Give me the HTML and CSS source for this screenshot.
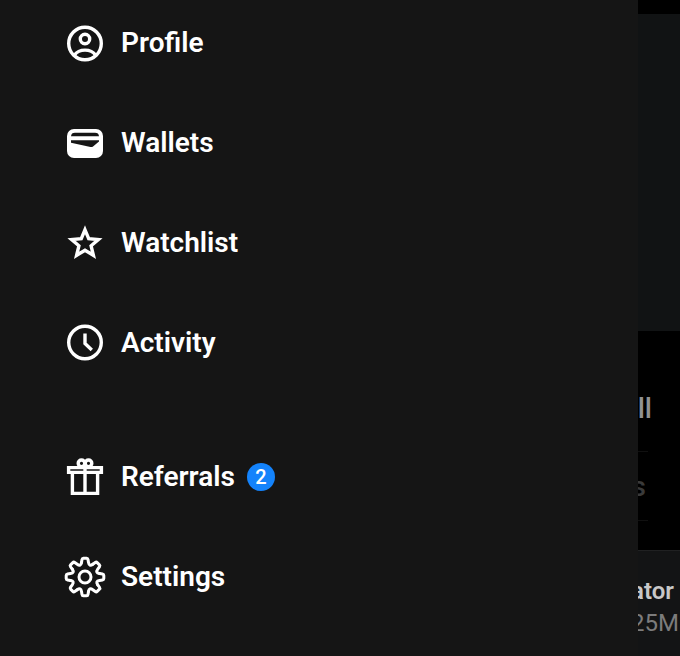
FILE: index.html
```html
<!DOCTYPE html>
<html lang="en">

<head>
  <meta charset="UTF-8" />
  <meta name="viewport" content="width=device-width, initial-scale=1.0" />
  <title>Menu</title>
  <link rel="stylesheet" href="styles.css">
</head>

<body>

  <div class="app">
    <nav class="drawer">
      <ul class="menu">
        <li>
          <a class="menu-link" href="#profile">
            <svg class="icon" viewBox="0 0 42 42">
              <circle cx="21" cy="21.5" r="16.3" />
              <circle cx="21" cy="17" r="4.7" />
              <path d="M10.5 33C15 26.5 27 26.5 31.5 33" />
            </svg>
            <span>Profile</span>
          </a>
        </li>
        <li>
          <a class="menu-link" href="#wallets">
            <svg class="icon" viewBox="0 0 42 42">
              <rect class="fill" x="3" y="7" width="36" height="29" rx="7" />
              <path class="cut" d="M7 14.2Q7.3 10.8 11 10.8H31Q34.7 10.8 35 14.2Z" />
              <path class="cut" d="M7 18.2H35V19.5L29 24.5Q28 25.3 26.5 25L7 20.7Z" />
            </svg>
            <span>Wallets</span>
          </a>
        </li>
        <li>
          <a class="menu-link" href="#watchlist">
            <svg class="icon" viewBox="0 0 42 42">
              <path d="M21 7.8L24.7 16.7L34.4 17.5L27.1 23.8L29.4 33.3L21 28.2L12.6 33.3L14.9 23.8L7.6 17.5L17.3 16.7Z" />
            </svg>
            <span>Watchlist</span>
          </a>
        </li>
        <li>
          <a class="menu-link" href="#activity">
            <svg class="icon" viewBox="0 0 42 42">
              <circle cx="21" cy="20.5" r="16.3" />
              <path d="M21 11.5V21.5L27.8 28" />
            </svg>
            <span>Activity</span>
          </a>
        </li>
      </ul>

      <ul class="menu">
        <li>
          <a class="menu-link" href="#referrals">
            <svg class="icon" viewBox="0 0 42 42">
              <path d="M4.6 11.6H37.4V16.4H4.6ZM8.4 17V37.4H33.6V17M21 11V37" />
              <circle cx="17.5" cy="7.3" r="3.3" />
              <circle cx="24.5" cy="7.3" r="3.3" />
            </svg>
            <span>Referrals</span>
            <span class="badge">2</span>
          </a>
        </li>
        <li>
          <a class="menu-link" href="#settings">
            <svg class="icon gear" viewBox="-21 -21 42 42">
              <path id="tooth" d="M-3.5 -14.5L-3 -17.5Q-2.8 -18.8 -1.6 -18.8H1.6Q2.8 -18.8 3 -17.5L3.5 -14.5Q4.2 -10.2 7.8 -12.7" />
              <use href="#tooth" transform="rotate(45)" />
              <use href="#tooth" transform="rotate(90)" />
              <use href="#tooth" transform="rotate(135)" />
              <use href="#tooth" transform="rotate(180)" />
              <use href="#tooth" transform="rotate(225)" />
              <use href="#tooth" transform="rotate(270)" />
              <use href="#tooth" transform="rotate(315)" />
              <circle r="6" />
            </svg>
            <span>Settings</span>
          </a>
        </li>
      </ul>
    </nav>

    <!-- dimmed page behind the open drawer -->
    <main class="page">
      <div class="card"></div>
      <div class="heading">ll</div>
      <div class="chip">s</div>
      <div class="token">
        <div class="token-name">ator</div>
        <div class="token-value">25M</div>
      </div>
    </main>
  </div>

</body>

</html>
```

FILE: styles.css
```css
* {
  box-sizing: border-box;
}
body {
  margin: 0;
  background: #000;
  font-family: Roboto, "Liberation Sans", sans-serif;
}
.app {
  display: grid;
  grid-template-columns: 1fr 42px;
  min-height: 100vh;
}
.drawer {
  display: flex;
  flex-direction: column;
  gap: 92px;
  padding: 22px 64px;
  background: #151515;
}
.menu {
  display: flex;
  flex-direction: column;
  gap: 58px;
  margin: 0;
  padding: 0;
  list-style: none;
}
.menu-link {
  display: flex;
  align-items: center;
  height: 42px;
  color: #fff;
  font-size: 28px;
  font-weight: 600;
  line-height: 32px;
  text-decoration: none;
}
.icon {
  width: 42px;
  height: 42px;
  margin-right: 15px;
  fill: none;
  stroke: #fff;
  stroke-width: 3.4;
}
.icon .fill {
  fill: #fff;
  stroke: none;
}
.icon .cut {
  fill: #151515;
  stroke: none;
}
.gear {
  stroke-width: 3;
  stroke-linejoin: round;
  stroke-linecap: round;
}
.badge {
  width: 28px;
  height: 28px;
  margin-left: 12px;
  border-radius: 50%;
  background: #1483fb;
  font-size: 20px;
  font-weight: 500;
  line-height: 28px;
  text-align: center;
}

.page {
  display: flex;
  flex-direction: column;
  padding-top: 14px;
  overflow: hidden;
  font-weight: 500;
}
.card {
  height: 317px;
  background: #111314;
}
.heading,
.chip,
.token-name,
.token-value {
  display: flex;
  justify-content: flex-end;
  overflow: hidden;
}
.heading {
  margin-top: 61px;
  padding-right: 28px;
  color: #929292;
  font-size: 28px;
  line-height: 34px;
}
.chip {
  height: 70px;
  margin: 25px 32px 29px 0;
  padding-right: 2px;
  border: solid #101010;
  border-width: 1px 0;
  color: #3a3a3a;
  font-size: 28px;
  line-height: 70px;
}
.token {
  flex: 1;
  padding-top: 24px;
  border-top: 1px solid #202122;
  background: #131415;
  font-size: 24px;
  line-height: 32px;
}
.token-name {
  padding-right: 6px;
  color: #c8c8c8;
  font-weight: 600;
}
.token-value {
  padding-right: 1px;
  color: #7c7c7c;
  font-weight: 400;
}
```
